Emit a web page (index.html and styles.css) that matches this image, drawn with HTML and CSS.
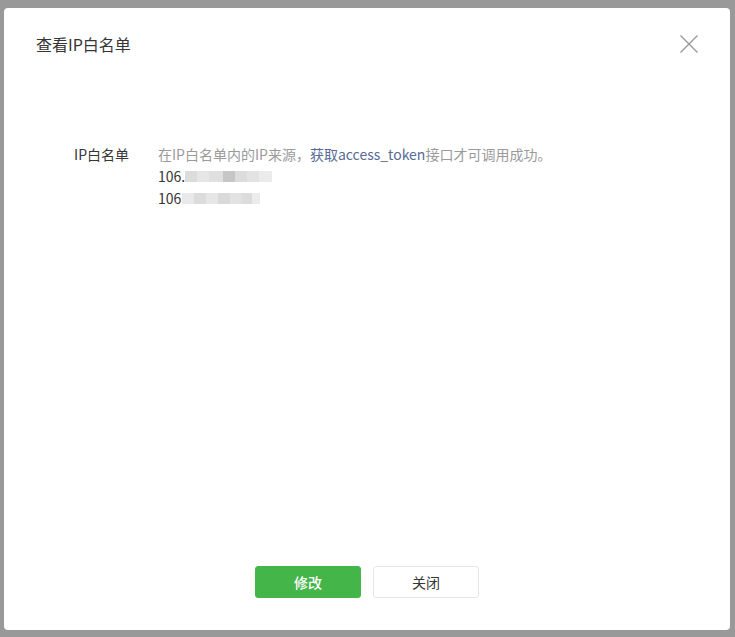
FILE: index.html
```html
<!DOCTYPE html>
<html lang="zh-CN">
<head>
<meta charset="utf-8">
<title>查看IP白名单</title>
<link rel="stylesheet" href="styles.css">
</head>
<body>
<div class="backdrop">
  <div class="dialog">
    <div class="dialog-header">
      <h3 class="dialog-title">查看IP白名单</h3>
      <button class="dialog-close" aria-label="关闭">
        <svg width="20" height="20" viewBox="0 0 20 20"><path d="M1.5 1.5 L18.5 18.5 M18.5 1.5 L1.5 18.5" stroke="#9a9a9a" stroke-width="1.4" fill="none"/></svg>
      </button>
    </div>
    <div class="dialog-body">
      <div class="form-row">
        <div class="form-label">IP白名单</div>
        <div class="form-content">
          <p class="tips">在IP白名单内的IP来源，<a class="link" href="#">获取access_token</a>接口才可调用成功。</p>
          <p class="ip">106.<span class="mask mask-a"></span></p>
          <p class="ip">106<span class="mask mask-b"></span></p>
        </div>
      </div>
    </div>
    <div class="dialog-footer">
      <button class="btn btn-primary">修改</button>
      <button class="btn btn-default">关闭</button>
    </div>
  </div>
</div>
</body>
</html>
```
FILE: styles.css
```css
* { box-sizing: border-box; }
html, body { margin: 0; padding: 0; }
body {
  background: #999999;
  font-family: "Noto Sans CJK SC", "Noto Sans", sans-serif;
  font-size: 14px;
  color: #353535;
  width: 735px;
  height: 637px;
  overflow: hidden;
}
.backdrop {
  padding: 8px 5px 7px 4px;
  height: 637px;
}
.dialog {
  background: #fff;
  border-radius: 4px;
  height: 622px;
  display: flex;
  flex-direction: column;
}
.dialog-header {
  height: 72px;
  padding: 0 31px 0 32px;
  display: flex;
  align-items: center;
  justify-content: space-between;
}
.dialog-title {
  margin: 0;
  font-size: 16px;
  font-weight: 400;
  color: #353535;
}
.dialog-close {
  border: 0;
  background: none;
  padding: 0;
  width: 20px;
  height: 20px;
  cursor: pointer;
  display: block;
}
.dialog-close svg { display: block; }
.dialog-body {
  flex: 1;
  padding-top: 63px;
}
.form-row {
  display: grid;
  grid-template-columns: 125px 1fr;
  column-gap: 29px;
  line-height: 22px;
}
.form-label {
  text-align: right;
  color: #353535;
}
.form-content p { margin: 0; }
.tips { color: #9a9a9a; }
.link { color: #576b95; text-decoration: none; }
.ip { color: #353535; display: flex; align-items: center; }
.mask {
  display: inline-block;
  height: 11px;
}
.mask-a {
  width: 87px;
  background: linear-gradient(to right,
    #dcdcdc 0 12px, #e6e6e6 12px 24px, #e0e0e0 24px 38px,
    #c6c6c6 38px 50px, #dcdcdc 50px 62px, #e3e3e3 62px 74px, #ebebeb 74px 87px);
}
.mask-b {
  width: 78px;
  margin-left: 1px;
  background: linear-gradient(to right,
    #e9e9e9 0 12px, #dcdcdc 12px 24px, #e6e6e6 24px 36px,
    #d9d9d9 36px 48px, #e2e2e2 48px 60px, #dcdcdc 60px 70px, #ececec 70px 78px);
}
.dialog-footer {
  display: flex;
  justify-content: center;
  gap: 12px;
  padding-bottom: 32px;
}
.btn {
  width: 106px;
  height: 32px;
  border-radius: 3px;
  font-family: inherit;
  font-size: 14px;
  cursor: pointer;
  padding: 0;
}
.btn-primary {
  background: #44b549;
  border: 1px solid #44b549;
  color: #fff;
  font-weight: 500;
}
.btn-default {
  background: #fff;
  border: 1px solid #e4e8eb;
  color: #353535;
}
```
